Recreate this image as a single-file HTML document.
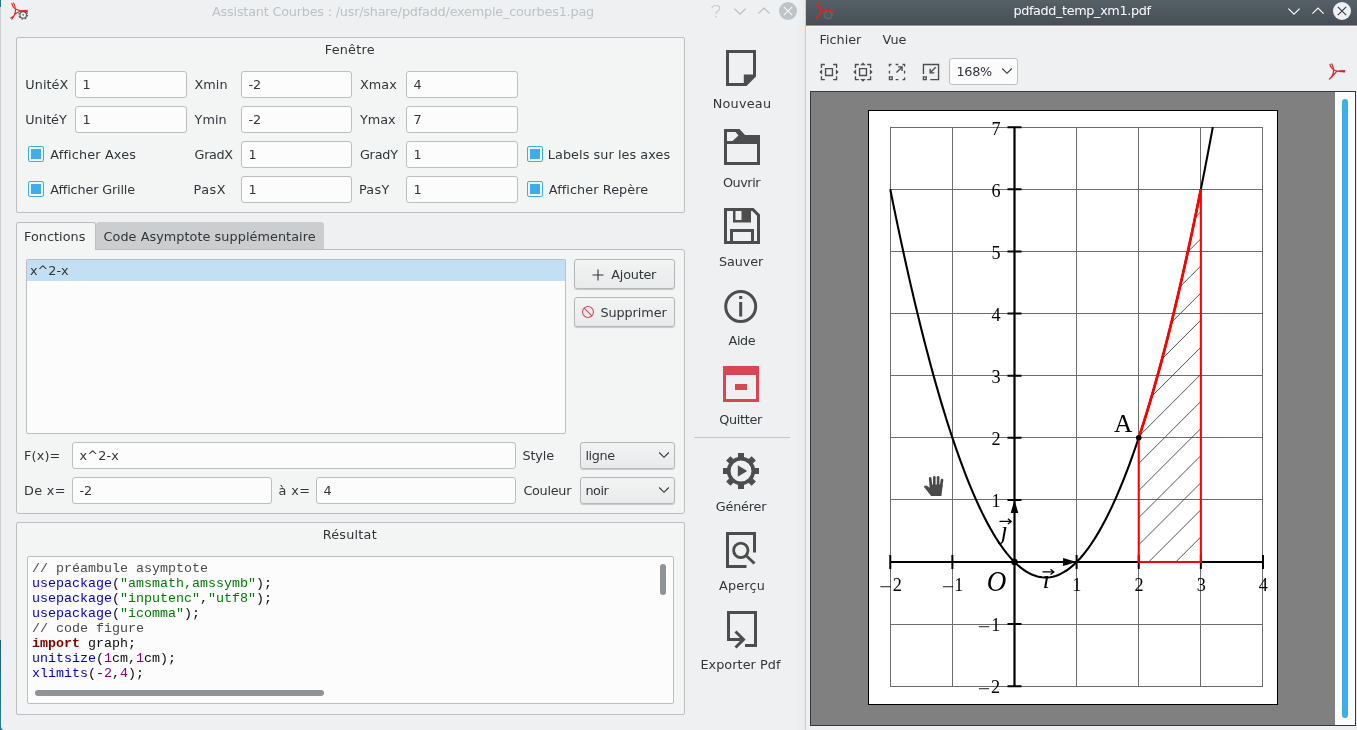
<!DOCTYPE html>
<html lang="fr">
<head>
<meta charset="utf-8">
<title>Assistant Courbes</title>
<style>
html,body{margin:0;padding:0;}
body{width:1357px;height:730px;overflow:hidden;position:relative;background:#eff0f1;font-family:"DejaVu Sans","Liberation Sans",sans-serif;font-size:12.8px;color:#31363b;}
.a{position:absolute;}
.t{position:absolute;white-space:nowrap;line-height:16px;height:16px;}
.c{text-align:center;}
.grp{position:absolute;border:1px solid #bcbec0;border-radius:2px;background:#f3f4f4;box-sizing:border-box;}
.inp{position:absolute;box-sizing:border-box;border:1px solid #bcbec0;border-radius:3px;background:#fcfcfc;height:27px;}
.inp span{position:absolute;left:6.5px;top:5px;line-height:16px;white-space:nowrap;}
.chk{position:absolute;width:16px;height:16px;box-sizing:border-box;border:1px solid #3daee9;border-radius:2px;background:#f3f4f4;}
.chk i{position:absolute;left:2px;top:2px;width:10px;height:10px;background:#3daee9;}
.btn{position:absolute;box-sizing:border-box;border:1px solid #b4b6b8;border-radius:3px;background:linear-gradient(#f2f3f3,#e9eaeb);box-shadow:0 1px 1px rgba(0,0,0,.18);}
.mono{font-family:"Liberation Mono","DejaVu Sans Mono",monospace;font-size:13.33px;}
.code div{height:15px;line-height:15px;white-space:pre;}
.k{color:#0000c8}.s{color:#007a00}.cm{color:#4a4a4a}.n{color:#800080}.im{color:#800000;font-weight:bold}.p{color:#0c0c0c}
</style>
</head>
<body>
<div id="root" style="position:absolute;left:0;top:0;width:1357px;height:730px;will-change:transform;">
<!-- LEFT WINDOW -->
<div class="a" id="lw" style="left:0;top:0;width:806px;height:730px;background:#eff0f1;"></div>
<div class="a" style="left:0;top:0;width:1px;height:7px;background:#1b7888;"></div>
<div class="a" style="left:1px;top:0;width:1px;height:7px;background:#f8f8f8;"></div>
<div class="a" style="left:0;top:7px;width:1px;height:633px;background:#cdd0d2;"></div>
<div class="a" style="left:0;top:640px;width:1px;height:90px;background:linear-gradient(#1d5f84,#2a7c99);"></div>
<div class="a" style="left:1px;top:640px;width:1px;height:87px;background:#f9f7f5;"></div>
<div class="a" style="left:1px;top:727px;width:2px;height:3px;background:#2a7c99;border-radius:0 0 0 0;"></div>
<div class="a" style="left:1px;top:724px;width:6px;height:6px;background:#eff0f1;border-radius:0 0 0 4px;"></div>
<div class="t c" style="left:203px;width:400px;top:4px;color:#bcc2c7;letter-spacing:-.2px;">Assistant Courbes : /usr/share/pdfadd/exemple_courbes1.pag</div>
<!-- Fenêtre group -->
<div class="grp" style="left:16px;top:37px;width:669px;height:176px;"></div>
<div class="t c" style="left:299.8px;width:100px;top:42px;letter-spacing:0.25px;">Fenêtre</div>
<div class="t" style="left:25.3px;top:77px;letter-spacing:0.06px;">UnitéX</div>
<div class="inp" style="left:75px;top:71px;width:112px;"><span>1</span></div>
<div class="t" style="left:194.6px;top:77px;letter-spacing:0.00px;">Xmin</div>
<div class="inp" style="left:241px;top:71px;width:111px;"><span>-2</span></div>
<div class="t" style="left:359.9px;top:77px;letter-spacing:0.10px;">Xmax</div>
<div class="inp" style="left:406px;top:71px;width:112px;"><span>4</span></div>
<div class="t" style="left:25.3px;top:112px;letter-spacing:-0.06px;">UnitéY</div>
<div class="inp" style="left:75px;top:106px;width:112px;"><span>1</span></div>
<div class="t" style="left:194.6px;top:112px;letter-spacing:0.00px;">Ymin</div>
<div class="inp" style="left:241px;top:106px;width:111px;"><span>-2</span></div>
<div class="t" style="left:359.9px;top:112px;letter-spacing:0.00px;">Ymax</div>
<div class="inp" style="left:406px;top:106px;width:112px;"><span>7</span></div>
<div class="chk" style="left:28px;top:146px;"><i></i></div>
<div class="t" style="left:50.3px;top:147px;letter-spacing:0.16px;">Afficher Axes</div>
<div class="t" style="left:194.6px;top:147px;letter-spacing:-0.38px;">GradX</div>
<div class="inp" style="left:241px;top:141px;width:111px;"><span>1</span></div>
<div class="t" style="left:359.9px;top:147px;letter-spacing:-0.20px;">GradY</div>
<div class="inp" style="left:406px;top:141px;width:112px;"><span>1</span></div>
<div class="chk" style="left:527px;top:146px;"><i></i></div>
<div class="t" style="left:547.8px;top:147px;letter-spacing:0.07px;">Labels sur les axes</div>
<div class="chk" style="left:28px;top:181px;"><i></i></div>
<div class="t" style="left:50.3px;top:182px;letter-spacing:-0.15px;">Afficher Grille</div>
<div class="t" style="left:193.6px;top:182px;letter-spacing:0.50px;">PasX</div>
<div class="inp" style="left:241px;top:176px;width:111px;"><span>1</span></div>
<div class="t" style="left:358.9px;top:182px;letter-spacing:0.33px;">PasY</div>
<div class="inp" style="left:406px;top:176px;width:112px;"><span>1</span></div>
<div class="chk" style="left:527px;top:181px;"><i></i></div>
<div class="t" style="left:548.8px;top:182px;letter-spacing:0.08px;">Afficher Repère</div>
<!-- Tabs -->
<div class="a" style="left:96px;top:222px;width:228px;height:27px;background:#cbcdce;border-radius:3px 3px 0 0;"></div>
<div class="grp" style="left:16px;top:249px;width:669px;height:265px;border-radius:0 3px 3px 3px;"></div>
<div class="a" style="left:16px;top:222px;width:80px;height:28px;box-sizing:border-box;border:1px solid #bcbec0;border-bottom:none;border-radius:3px 3px 0 0;background:#f3f4f4;"></div>
<div class="t" style="left:24.0px;top:229px;letter-spacing:0.03px;">Fonctions</div>
<div class="t" style="left:103.5px;top:229px;letter-spacing:0.06px;">Code Asymptote supplémentaire</div>
<!-- list -->
<div class="a" style="left:26px;top:259px;width:540px;height:175px;box-sizing:border-box;border:1px solid #bcbec0;border-radius:2px;background:#fcfcfc;"></div>
<div class="a" style="left:27px;top:260px;width:538px;height:21px;background:#c2dff3;"></div>
<div class="t" style="left:30px;top:263px;">x^2-x</div>
<div class="btn" style="left:574px;top:259px;width:101px;height:30px;"></div>
<svg class="a" style="left:590px;top:267px;" width="16" height="16" viewBox="0 0 16 16"><path d="M8 2.5v11M2.5 8h11" stroke="#31363b" stroke-width="1.1" fill="none"/></svg>
<div class="t" style="left:611.3px;top:267px;letter-spacing:-0.22px;">Ajouter</div>
<div class="btn" style="left:574px;top:297px;width:101px;height:30px;"></div>
<svg class="a" style="left:580px;top:304px;" width="16" height="16" viewBox="0 0 16 16"><circle cx="8" cy="8" r="5.5" stroke="#da4453" stroke-width="1.1" fill="none"/><path d="M4.1 4.1l7.8 7.8" stroke="#da4453" stroke-width="1.1"/></svg>
<div class="t" style="left:600.4px;top:305px;letter-spacing:-0.07px;">Supprimer</div>
<!-- F(x) rows -->
<div class="t" style="left:24.0px;top:448px;letter-spacing:0.15px;">F(x)=</div>
<div class="inp" style="left:72px;top:442px;width:444px;"><span style="letter-spacing:.2px">x^2-x</span></div>
<div class="t" style="left:522.4px;top:448px;letter-spacing:-0.10px;">Style</div>
<div class="btn" style="left:580px;top:442px;width:95px;height:27px;"></div>
<div class="t" style="left:585.4px;top:448px;letter-spacing:-0.35px;">ligne</div>
<svg class="a" style="left:658px;top:451px;" width="12" height="8" viewBox="0 0 12 8"><path d="M1.2 1.5L6 6.3L10.8 1.5" stroke="#31363b" stroke-width="1.1" fill="none"/></svg>
<div class="t" style="left:24.0px;top:483px;letter-spacing:0.35px;">De x=</div>
<div class="inp" style="left:72px;top:477px;width:200px;"><span>-2</span></div>
<div class="t" style="left:278.4px;top:483px;letter-spacing:0.43px;">à x=</div>
<div class="inp" style="left:316px;top:477px;width:200px;"><span>4</span></div>
<div class="t" style="left:523.4px;top:483px;letter-spacing:-0.27px;">Couleur</div>
<div class="btn" style="left:580px;top:477px;width:95px;height:27px;"></div>
<div class="t" style="left:585.4px;top:483px;letter-spacing:-0.47px;">noir</div>
<svg class="a" style="left:658px;top:486px;" width="12" height="8" viewBox="0 0 12 8"><path d="M1.2 1.5L6 6.3L10.8 1.5" stroke="#31363b" stroke-width="1.1" fill="none"/></svg>
<!-- Résultat -->
<div class="grp" style="left:16px;top:522px;width:669px;height:193px;"></div>
<div class="t c" style="left:299.8px;width:100px;top:527px;letter-spacing:0.24px;">Résultat</div>
<div class="a" style="left:27px;top:556px;width:647px;height:148px;box-sizing:border-box;border:1px solid #bcbec0;border-radius:2px;background:#fcfcfc;"></div>
<div class="a mono code" style="left:32px;top:561px;">
<div><span class="cm">// préambule asymptote</span></div>
<div><span class="k">usepackage</span><span class="p">(</span><span class="s">"amsmath,amssymb"</span><span class="p">);</span></div>
<div><span class="k">usepackage</span><span class="p">(</span><span class="s">"inputenc"</span><span class="p">,</span><span class="s">"utf8"</span><span class="p">);</span></div>
<div><span class="k">usepackage</span><span class="p">(</span><span class="s">"icomma"</span><span class="p">);</span></div>
<div><span class="cm">// code figure</span></div>
<div><span class="im">import</span><span class="p"> graph;</span></div>
<div><span class="k">unitsize</span><span class="p">(</span><span class="n">1</span><span class="p">cm,</span><span class="n">1</span><span class="p">cm);</span></div>
<div><span class="k">xlimits</span><span class="p">(-</span><span class="n">2</span><span class="p">,</span><span class="n">4</span><span class="p">);</span></div>
</div>
<div class="a" style="left:35px;top:690px;width:289px;height:6px;border-radius:3px;background:#8f9396;"></div>
<div class="a" style="left:660px;top:564px;width:6px;height:31px;border-radius:3px;background:#8f9396;"></div>
<!--LEFT-CONTENT-->
<!-- toolbar -->
<svg class="a" style="left:726px;top:50px;" width="30" height="36" viewBox="0 0 30 36"><path fill="#4d4d4d" fill-rule="evenodd" d="M0 0H30V26.5L20.5 36H0ZM3 3V33H17.8V24.5H27V3Z"/></svg>
<div class="t c" style="left:692.0px;width:100px;top:96px;letter-spacing:0.25px;">Nouveau</div>
<svg class="a" style="left:724px;top:129px;" width="36" height="36" viewBox="0 0 36 36"><path fill="#4d4d4d" fill-rule="evenodd" d="M0 0H15.5L21 6H36V36H0ZM3 3V12H8.5L14.5 6.5L11.5 3ZM3 15V33H33V15Z"/></svg>
<div class="t c" style="left:691.5px;width:100px;top:175px;letter-spacing:-0.46px;">Ouvrir</div>
<svg class="a" style="left:724px;top:208px;" width="36" height="36" viewBox="0 0 36 36"><path fill="#4d4d4d" fill-rule="evenodd" d="M0 0H29.5L36 6.5V36H0ZM3 3V33H6V21H30V33H33V7.8L28.2 3H27V14.5H9V3ZM11.5 3V12H17.5V3ZM9 24V33H27V24Z"/></svg>
<div class="t c" style="left:691.1px;width:100px;top:254px;letter-spacing:-0.06px;">Sauver</div>
<svg class="a" style="left:722px;top:288px;" width="38" height="38" viewBox="0 0 38 38"><circle cx="18.7" cy="18.5" r="15" fill="none" stroke="#4d4d4d" stroke-width="3"/><rect x="17.2" y="8" width="3" height="3" fill="#4d4d4d"/><rect x="17.2" y="14" width="3" height="14.5" fill="#4d4d4d"/></svg>
<div class="t c" style="left:691.9px;width:100px;top:333px;letter-spacing:-0.43px;">Aide</div>
<svg class="a" style="left:723px;top:366px;" width="36" height="36" viewBox="0 0 36 36"><path fill="#da4453" fill-rule="evenodd" d="M0 0H36V36H0ZM3 9V33H33V9ZM12 18H24V24H12Z"/></svg>
<div class="t c" style="left:690.6px;width:100px;top:412px;letter-spacing:-0.32px;">Quitter</div>
<div class="a" style="left:694px;top:437px;width:96px;height:1px;background:#c4c6c8;"></div>
<svg class="a" style="left:722px;top:452px;" width="38" height="38" viewBox="-19 -19 38 38"><g fill="#4d4d4d"><g id="gt"><rect x="-3" y="-18" width="6" height="7"/><rect x="-3" y="11" width="6" height="7"/></g><use href="#gt" transform="rotate(45)"/><use href="#gt" transform="rotate(90)"/><use href="#gt" transform="rotate(135)"/></g><circle r="12.3" fill="none" stroke="#4d4d4d" stroke-width="3.700"/><path d="M-3.2 -5.7L6.2 0L-3.2 5.7Z" fill="#4d4d4d"/></svg>
<div class="t c" style="left:691.0px;width:100px;top:499px;letter-spacing:-0.20px;">Générer</div>
<svg class="a" style="left:726px;top:532px;" width="30" height="36" viewBox="0 0 30 36"><path d="M20.5 34.5H1.5V1.5H28.5V20.5" fill="none" stroke="#4d4d4d" stroke-width="3"/><circle cx="14.8" cy="18.3" r="7.2" fill="none" stroke="#4d4d4d" stroke-width="2.8"/><path d="M20 23.5L28.5 31.5" stroke="#4d4d4d" stroke-width="3" fill="none"/></svg>
<div class="t c" style="left:692.0px;width:100px;top:578px;letter-spacing:0.16px;">Aperçu</div>
<svg class="a" style="left:726px;top:611px;" width="32" height="38" viewBox="0 0 32 38"><path d="M2.5 30V1.5H29.5V34.5H19" fill="none" stroke="#4d4d4d" stroke-width="3"/><path d="M1 28.5H17" fill="none" stroke="#4d4d4d" stroke-width="3"/><path d="M9.5 20.5L17.5 28.5L9.5 36.5" fill="none" stroke="#4d4d4d" stroke-width="3"/></svg>
<div class="t c" style="left:690.5px;width:100px;top:657px;letter-spacing:0.06px;">Exporter Pdf</div>
<!-- left titlebar items -->
<svg class="a" style="left:10px;top:2px;" width="19" height="19" viewBox="0 0 19 19"><circle cx="13.200" cy="12.900" r="3.300" fill="none" stroke="#55595d" stroke-width="1.100"/><circle cx="13.200" cy="12.900" r="4.300" fill="none" stroke="#55595d" stroke-width="1.100" stroke-dasharray="1.700 1.680"/><circle cx="13.200" cy="12.900" r=".8" fill="#55595d"/><path d="M1.800 1.400C2.600 4.400 4 6.200 5.600 7L10.600 8.900L17.400 9.600M.7 16C3.200 14.600 4.800 13 5.600 11.400L10.600 8.900L17.400 8.200M3.600 .9C5 3.400 5.700 6.600 5.400 9.400C5.100 12.400 3.600 15.200 1.800 17.200" fill="none" stroke="#e02424" stroke-width="1.100" stroke-linecap="round" stroke-linejoin="round"/></svg>
<svg class="a" style="left:709px;top:3px;" width="14" height="16" viewBox="0 0 14 16"><path d="M3 5.200C3 3.400 4.600 2.500 6.800 2.500C9.200 2.500 10.800 3.600 10.800 5.300C10.800 7.800 7 7.800 7 11" fill="none" stroke="#c8ccce" stroke-width="1.200"/><rect x="6.300" y="12.800" width="1.500" height="1.500" fill="#c8ccce"/></svg>
<svg class="a" style="left:732px;top:4px;" width="16" height="14" viewBox="0 0 16 14"><path d="M2.400 4.600L8 10.200L13.600 4.600" fill="none" stroke="#b9bdc0" stroke-width="1.200"/></svg>
<svg class="a" style="left:756px;top:4px;" width="16" height="14" viewBox="0 0 16 14"><path d="M2.400 9.600L8 4L13.600 9.600" fill="none" stroke="#b9bdc0" stroke-width="1.200"/></svg>
<svg class="a" style="left:778px;top:1px;" width="20" height="20" viewBox="0 0 20 20"><circle cx="10" cy="10" r="9" fill="#bdc3c7"/><path d="M5.800 5.800l8.400 8.400M14.200 5.800l-8.400 8.400" stroke="#f4f5f5" stroke-width="1.200"/></svg>
<div class="a" style="left:796px;top:0;width:10px;height:730px;background:linear-gradient(90deg,rgba(0,0,0,0),rgba(0,0,0,.025));"></div>
<div class="a" style="left:805px;top:0;width:1px;height:730px;background:#cbcdcf;"></div>
<!--TOOLBAR-->
<!-- RIGHT WINDOW -->
<div class="a" id="rw" style="left:806px;top:0;width:551px;height:730px;background:#eff0f1;"></div>
<div class="a" style="left:806px;top:0;width:551px;height:25px;background:linear-gradient(#566067,#474f55);"></div>
<div class="a" style="left:806px;top:24px;width:551px;height:1px;background:#484c4f;"></div>
<div class="a" style="left:806px;top:25px;width:551px;height:1px;background:#3daee9;"></div>
<div class="a" style="left:806px;top:26px;width:551px;height:1px;background:#f8f7f6;"></div>
<div class="t c" style="left:982px;width:200px;top:3px;color:#fcfcfc;letter-spacing:-.37px;">pdfadd_temp_xm1.pdf</div>
<!-- right titlebar items -->
<svg class="a" style="left:815px;top:2px;" width="19" height="19" viewBox="0 0 19 19"><g opacity=".42"><circle cx="13.2" cy="12.9" r="3.3" fill="none" stroke="#7b7f83" stroke-width="1.4"/><circle cx="13.2" cy="12.9" r="4.3" fill="none" stroke="#7b7f83" stroke-width="1.3" stroke-dasharray="1.7 1.68"/><circle cx="13.2" cy="12.9" r=".8" fill="#7b7f83"/></g><path d="M1.800 1.400C2.600 4.400 4 6.200 5.600 7L10.600 8.900L17.400 9.600M.7 16C3.200 14.600 4.800 13 5.600 11.400L10.600 8.900L17.400 8.200M3.600 .9C5 3.400 5.700 6.600 5.400 9.400C5.100 12.400 3.600 15.200 1.800 17.200" fill="none" stroke="#e02424" stroke-width="1.100" stroke-linecap="round" stroke-linejoin="round"/></svg>
<svg class="a" style="left:1286px;top:4px;" width="16" height="14" viewBox="0 0 16 14"><path d="M2.4 4.6L8 10.2L13.6 4.6" fill="none" stroke="#fcfcfc" stroke-width="1.2"/></svg>
<svg class="a" style="left:1310px;top:4px;" width="16" height="14" viewBox="0 0 16 14"><path d="M2.4 9.6L8 4L13.6 9.6" fill="none" stroke="#fcfcfc" stroke-width="1.2"/></svg>
<svg class="a" style="left:1332px;top:1px;" width="20" height="20" viewBox="0 0 20 20"><circle cx="10" cy="10" r="9" fill="#eff0f1"/><path d="M5.8 5.8l8.4 8.4M14.200 5.8l-8.4 8.4" stroke="#3b4045" stroke-width="1.2"/></svg>
<!-- menubar -->
<div class="t" style="left:819.500px;top:32px;">Fichier</div>
<div class="t" style="left:882.500px;top:32px;">Vue</div>
<!-- toolbar icons -->
<svg class="a" style="left:818px;top:61px;" width="22" height="22" viewBox="0 0 16 16"><path fill="#4d4d4d" d="M2 2v3h1V3h2V2zM11 2v1h2v2h1V2zM5 5v6h6V5zM6 6h4v4H6zM3 6L1 8l2 2zM13 6v4l2-2zM2 11v3h3v-1H3v-2zM13 11v2h-2v1h3v-3z"/></svg>
<svg class="a" style="left:852px;top:61px;" width="22" height="22" viewBox="0 0 16 16"><path fill="#4d4d4d" d="M2 2v3h1V3h2V2zM11 2v1h2v2h1V2zM5 5v6h6V5zM6 6h4v4H6zM3 6L1 8l2 2zM13 6v4l2-2zM2 11v3h3v-1H3v-2zM13 11v2h-2v1h3v-3zM6 3l2-2l2 2zM6 13h4l-2 2z"/></svg>
<svg class="a" style="left:886px;top:61px;" width="22" height="22" viewBox="0 0 16 16"><path fill="#4d4d4d" d="M2 2v2h1V3h1V2zM7 2v1h2V2zM12 2v1h1v1h1V2zM13 7v2h1V7zM13 12v1h-1v1h2v-2zM7 13v1h2v-1zM2 7v2h1V7zM2 11v3h3v-3zM3 12h1v1H3z"/><path d="M7.600 8.400L11.700 4.300M8.800 4.300H11.700V7.200" fill="none" stroke="#4d4d4d" stroke-width="1"/></svg>
<svg class="a" style="left:920px;top:61px;" width="22" height="22" viewBox="0 0 16 16"><path fill="#4d4d4d" d="M2 2v7.500h1V3h10v10H7.500v1H14V2zM2 11v3h3v-3zM3 12h1v1H3z"/><path d="M11.400 4.600L7.400 8.600M7.400 5.600V8.600H10.400" fill="none" stroke="#4d4d4d" stroke-width="1"/></svg>
<div class="a" style="left:949px;top:58px;width:69px;height:27px;box-sizing:border-box;border:1px solid #bcbec0;border-radius:3px;background:#fcfcfc;"></div>
<div class="t" style="left:956.500px;top:64px;letter-spacing:-.3px;">168%</div>
<svg class="a" style="left:1001px;top:67px;" width="12" height="8" viewBox="0 0 12 8"><path d="M1.200 1.500L6 6.300L10.800 1.500" stroke="#31363b" stroke-width="1.100" fill="none"/></svg>
<svg class="a" style="left:1328px;top:63px;" width="18" height="18" viewBox="0 0 19 19"><path d="M2 1.500C2.600 4.600 4.600 7 9.400 8.600L17.600 8M1.500 16.800C4.500 14.600 6.200 11.800 9.400 8.600M4 1C5.600 4 6.400 8 5.400 11.200C4.800 13.400 3.200 15.400 1.500 17M17.600 9.400L11 8.800" fill="none" stroke="#dc2626" stroke-width="1.300" stroke-linecap="round"/></svg>
<!-- pdf view frame -->
<div class="a" style="left:810px;top:91px;width:546px;height:635px;box-sizing:border-box;border:1px solid #33383d;background:#808080;"></div>
<div class="a" style="left:1335px;top:92px;width:20px;height:633px;background:#fcfcfc;"></div>
<div class="a" style="left:1342px;top:99px;width:6px;height:619px;border-radius:3px;background:#3daee9;"></div>
<!--GRAPH-START-->
<svg class="a" style="left:811px;top:92px;" width="524" height="633" viewBox="0 0 524 633">
<rect x="57.5" y="18.5" width="409.0" height="594.0" fill="#fff" stroke="#000" stroke-width="1"/>
<path d="M79.5 35.0V595.0M141.5 35.0V595.0M203.5 35.0V595.0M265.5 35.0V595.0M327.5 35.0V595.0M389.5 35.0V595.0M451.5 35.0V595.0M79.0 594.5H452.0M79.0 532.5H452.0M79.0 470.5H452.0M79.0 407.5H452.0M79.0 345.5H452.0M79.0 283.5H452.0M79.0 221.5H452.0M79.0 159.5H452.0M79.0 97.5H452.0M79.0 35.5H452.0" stroke="#6c6c6c" stroke-width="1" fill="none"/>
<clipPath id="hc"><polygon points="327.74,345.76 329.88,339.26 332.02,332.61 334.17,325.82 336.31,318.87 338.45,311.78 340.59,304.54 342.73,297.16 344.88,289.62 347.02,281.94 349.16,274.11 351.30,266.13 353.44,258.01 355.59,249.74 357.73,241.32 359.87,232.75 362.01,224.03 364.16,215.17 366.30,206.16 368.44,197.00 370.58,187.69 372.72,178.24 374.87,168.63 377.01,158.88 379.15,148.99 381.29,138.94 383.43,128.75 385.58,118.41 387.72,107.92 389.86,97.28 389.86,470.00 327.74,470.00"/></clipPath>
<path d="M394.86 114.70L309.86 199.70M394.86 141.80L309.86 226.80M394.86 168.90L309.86 253.90M394.86 196.00L309.86 281.00M394.86 223.10L309.86 308.10M394.86 250.20L309.86 335.20M394.86 277.30L309.86 362.30M394.86 304.40L309.86 389.40M394.86 331.50L309.86 416.50M394.86 358.60L309.86 443.60M394.86 385.70L309.86 470.70M394.86 412.80L309.86 497.80M394.86 439.90L309.86 524.90M394.86 467.00L309.86 552.00M394.86 494.10L309.86 579.10M394.86 521.20L309.86 606.20M394.86 548.30L309.86 633.30M394.86 575.40L309.86 660.40" stroke="#4a4a4a" stroke-width="0.95" fill="none" clip-path="url(#hc)"/>
<path d="M79.26 470.00H451.98M203.50 594.24V35.16" stroke="#000" stroke-width="2.2" fill="none"/>
<path d="M79.26 463.00v14M141.38 463.00v14M265.62 463.00v14M327.74 463.00v14M389.86 463.00v14M451.98 463.00v14M196.50 594.24h14M196.50 532.12h14M196.50 407.88h14M196.50 345.76h14M196.50 283.64h14M196.50 221.52h14M196.50 159.40h14M196.50 97.28h14M196.50 35.16h14" stroke="#000" stroke-width="2" fill="none"/>
<polyline points="79.26,97.28 81.97,110.71 84.68,123.91 87.39,136.87 90.10,149.60 92.81,162.09 95.52,174.34 98.23,186.36 100.94,198.13 103.66,209.68 106.37,220.98 109.08,232.05 111.79,242.88 114.50,253.48 117.21,263.84 119.92,273.96 122.63,283.85 125.34,293.50 128.05,302.91 130.76,312.09 133.47,321.03 136.18,329.73 138.89,338.20 141.60,346.43 144.31,354.43 147.03,362.18 149.74,369.70 152.45,376.99 155.16,384.04 157.87,390.85 160.58,397.42 163.29,403.76 166.00,409.86 168.71,415.73 171.42,421.36 174.13,426.75 176.84,431.90 179.55,436.82 182.26,441.50 184.97,445.95 187.68,450.16 190.40,454.13 193.11,457.87 195.82,461.37 198.53,464.63 201.24,467.66 203.95,470.45 206.66,473.00 209.37,475.31 212.08,477.40 214.79,479.24 217.50,480.85 220.21,482.22 222.92,483.35 225.63,484.25 228.34,484.91 231.05,485.33 233.77,485.52 236.48,485.47 239.19,485.19 241.90,484.66 244.61,483.90 247.32,482.91 250.03,481.68 252.74,480.21 255.45,478.51 258.16,476.56 260.87,474.39 263.58,471.97 266.29,469.32 269.00,466.43 271.71,463.31 274.42,459.95 277.13,456.35 279.85,452.52 282.56,448.45 285.27,444.14 287.98,439.60 290.69,434.82 293.40,429.80 296.11,424.55 298.82,419.06 301.53,413.33 304.24,407.37 306.95,401.17 309.66,394.73 312.37,388.06 315.08,381.15 317.79,374.01 320.50,366.62 323.22,359.00 325.93,351.15 328.64,343.06 331.35,334.73 334.06,326.16 336.77,317.36 339.48,308.32 342.19,299.05 344.90,289.54 347.61,279.79 350.32,269.81 353.03,259.59 355.74,249.13 358.45,238.43 361.16,227.50 363.87,216.34 366.59,204.93 369.30,193.29 372.01,181.42 374.72,169.30 377.43,156.95 380.14,144.37 382.85,131.54 385.56,118.48 388.27,105.19 390.98,91.66 393.69,77.89 396.40,63.88 399.11,49.64 401.82,35.16" stroke="#000" stroke-width="2.1" fill="none"/>
<polyline points="389.86,97.28 389.86,470.00 327.74,470.00 327.74,345.76" stroke="#f00" stroke-width="2.1" fill="none"/>
<polyline points="327.74,345.76 329.88,339.26 332.02,332.61 334.17,325.82 336.31,318.87 338.45,311.78 340.59,304.54 342.73,297.16 344.88,289.62 347.02,281.94 349.16,274.11 351.30,266.13 353.44,258.01 355.59,249.74 357.73,241.32 359.87,232.75 362.01,224.03 364.16,215.17 366.30,206.16 368.44,197.00 370.58,187.69 372.72,178.24 374.87,168.63 377.01,158.88 379.15,148.99 381.29,138.94 383.43,128.75 385.58,118.41 387.72,107.92 389.86,97.28" stroke="#f00" stroke-width="2.7" fill="none"/>
<path d="M265.62 470.00l-13.5 -4v8Z M203.50 407.88l-3.8 13h7.6Z" fill="#000"/>
<circle cx="203.50" cy="470.00" r="3.2" fill="#000"/><circle cx="327.74" cy="345.76" r="2.8" fill="#000"/>
<g font-family="'Liberation Serif','DejaVu Serif',serif" fill="#000">
<text x="265.9" y="499.2" font-size="18.2" text-anchor="middle">1</text>
<text x="328.0" y="499.2" font-size="18.2" text-anchor="middle">2</text>
<text x="390.2" y="499.2" font-size="18.2" text-anchor="middle">3</text>
<text x="452.3" y="499.2" font-size="18.2" text-anchor="middle">4</text>
<text x="68.3" y="500.5" font-size="18.2" textLength="12.5" lengthAdjust="spacingAndGlyphs">−</text>
<text x="86.2" y="499.2" font-size="18.2" text-anchor="middle">2</text>
<text x="130.7" y="500.5" font-size="18.2" textLength="12.5" lengthAdjust="spacingAndGlyphs">−</text>
<text x="147.7" y="499.2" font-size="18.2" text-anchor="middle">1</text>
<text x="189.6" y="42.6" font-size="18.2" text-anchor="end" >7</text>
<text x="189.6" y="104.7" font-size="18.2" text-anchor="end" >6</text>
<text x="189.6" y="166.8" font-size="18.2" text-anchor="end" >5</text>
<text x="189.6" y="228.9" font-size="18.2" text-anchor="end" >4</text>
<text x="189.6" y="291.0" font-size="18.2" text-anchor="end" >3</text>
<text x="189.6" y="353.2" font-size="18.2" text-anchor="end" >2</text>
<text x="189.6" y="415.3" font-size="18.2" text-anchor="end" >1</text>
<text x="166.8" y="540.7" font-size="18.2" textLength="12.5" lengthAdjust="spacingAndGlyphs">−</text>
<text x="184.7" y="539.4" font-size="18.2" text-anchor="middle">1</text>
<text x="166.8" y="602.7" font-size="18.2" textLength="12.5" lengthAdjust="spacingAndGlyphs">−</text>
<text x="184.6" y="601.4" font-size="18.2" text-anchor="middle">2</text>
<text x="312.3" y="339.8" font-size="25.5" text-anchor="middle" >A</text>
<text transform="translate(185.6,498.6) scale(1.04,1.16)" font-size="26" text-anchor="middle" font-style="italic">O</text>
<text x="235.2" y="496.0" font-size="25.5" text-anchor="middle" font-style="italic">ı</text>
<text x="193.2" y="446.6" font-size="25.5" text-anchor="middle" font-style="italic">ȷ</text>
</g>
<path d="M231.5 479.9h11.2m-3.2 -2.6l3.4 2.6l-3.4 2.6 M188.5 429.4h11.6m-3.2 -2.6l3.4 2.6l-3.4 2.6" stroke="#000" stroke-width="1.25" fill="none"/>
</svg>
<!--GRAPH-END-->
<svg class="a" style="left:923px;top:475px;" width="22" height="22" viewBox="0 0 22 22"><g fill="#4a4a4a"><rect x="6.200" y="2" width="2.700" height="10" rx="1.300" transform="rotate(-6 7.500 7)"/><rect x="10" y=".9" width="2.600" height="11" rx="1.300"/><rect x="13.800" y=".9" width="2.600" height="11" rx="1.300"/><rect x="17.200" y="3.600" width="2.700" height="10" rx="1.300" transform="rotate(9 18.500 8)"/><path d="M6.600 9.500H19.800L18.400 21H8.200L1.200 12.200Q.6 11 2 10.700L3.600 10.600L6.600 12.800Z"/></g></svg>
<!--RIGHT-CONTENT-->
</div>
</body>
</html>
